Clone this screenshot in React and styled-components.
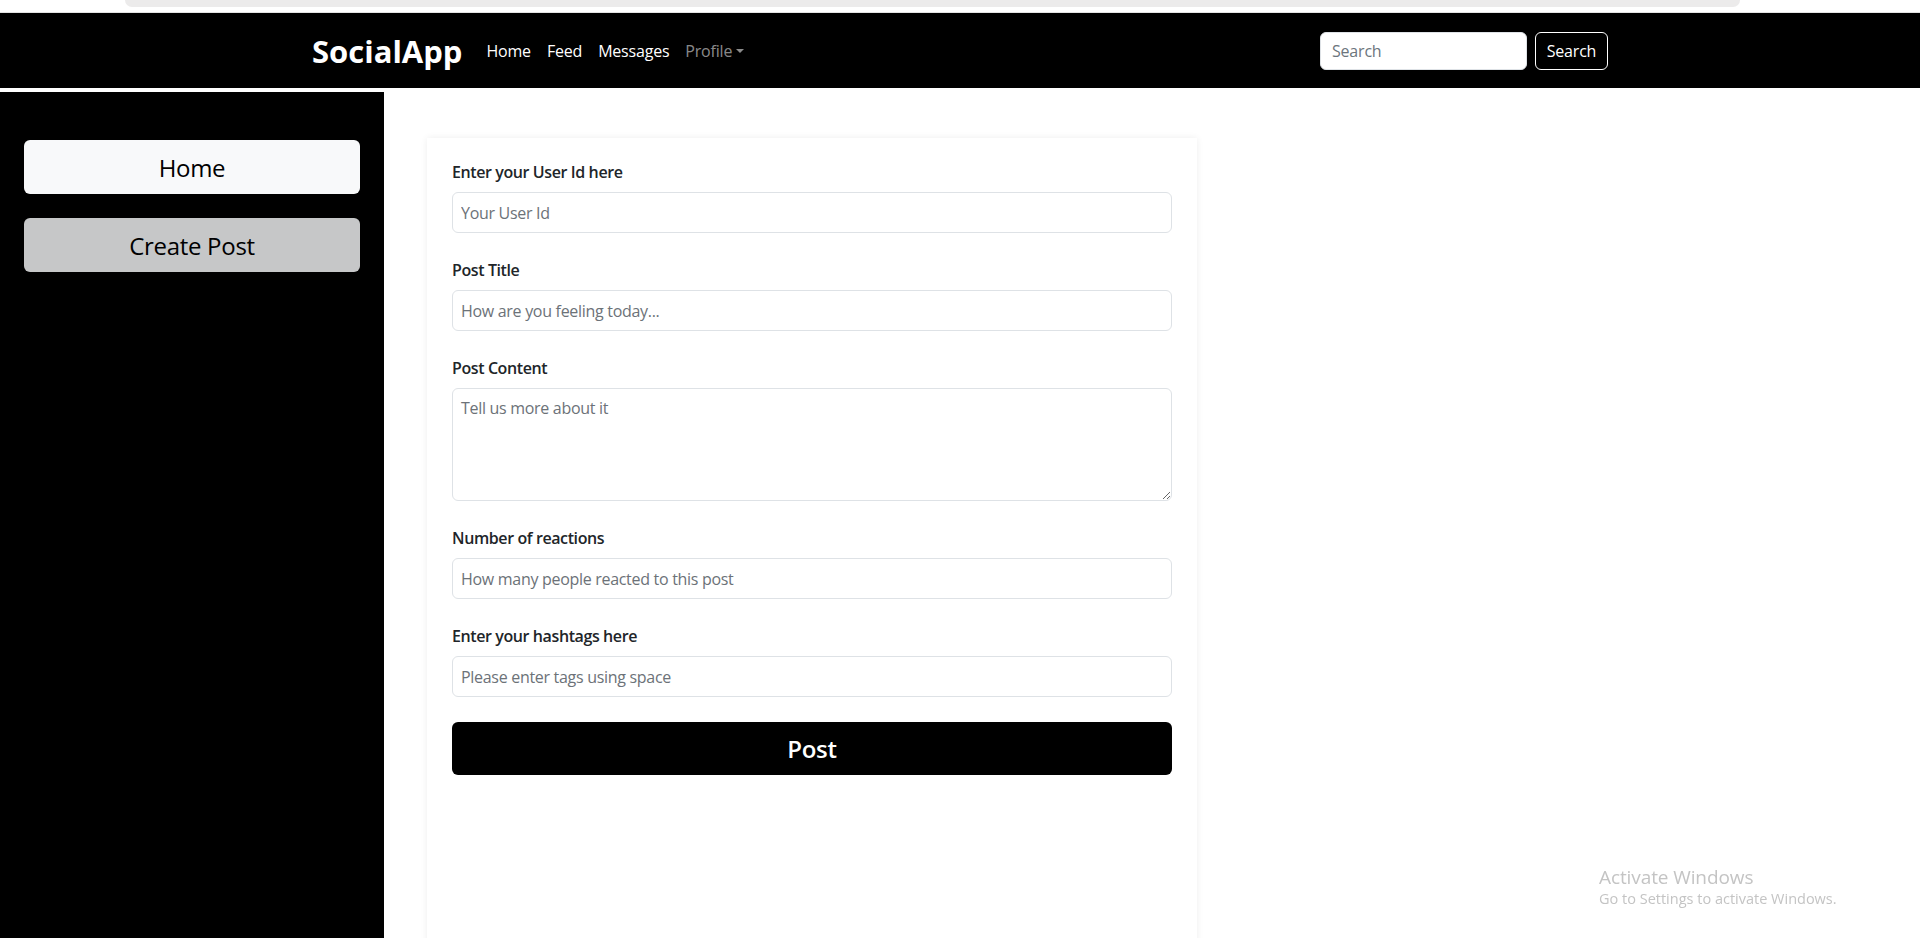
import React from "react";
import styled, { createGlobalStyle } from "styled-components";

const Global = createGlobalStyle`
  html, body {
    margin: 0;
    padding: 0;
    height: 100%;
    overflow: hidden;
    background: #fff;
  }
  body {
    font-family: "Segoe UI", "Open Sans", "Noto Sans", sans-serif;
    color: #212529;
  }
  * { box-sizing: border-box; }
`;

const Page = styled.div`
  display: flex;
  flex-direction: column;
  height: 100vh;
`;

const BrowserStrip = styled.div`
  height: 13px;
  background: #fff;
  border-bottom: 1px solid #e2e2e2;
  padding: 0 180px 0 125px;
  flex-shrink: 0;
`;

const AddressBar = styled.div`
  height: 7px;
  background: #ecebeb;
  border-radius: 0 0 14px 14px;
`;

const Navbar = styled.nav`
  background: #000;
  height: 75px;
  flex-shrink: 0;
  display: flex;
  justify-content: center;
`;

const NavContainer = styled.div`
  width: 100%;
  max-width: 1320px;
  padding: 0 12px;
  display: flex;
  align-items: center;
`;

const Brand = styled.a`
  color: #fff;
  font-size: 31px;
  font-weight: 700;
  letter-spacing: 0;
  margin-right: 16px;
  text-decoration: none;
`;

const NavList = styled.div`
  display: flex;
  align-items: center;
`;

const NavLink = styled.a`
  color: ${(p) => (p.$muted ? "rgba(255,255,255,0.55)" : "#fff")};
  font-size: 16px;
  padding: 8px;
  text-decoration: none;
  display: flex;
  align-items: center;
  letter-spacing: -0.2px;
`;

const Caret = styled.span`
  display: inline-block;
  margin-left: 4px;
  border-top: 4.5px solid currentColor;
  border-left: 4px solid transparent;
  border-right: 4px solid transparent;
`;

const SearchForm = styled.form`
  margin-left: auto;
  display: flex;
  gap: 8px;
`;

const SearchInput = styled.input`
  width: 207px;
  height: 38px;
  border: 1px solid #dee2e6;
  border-radius: 6px;
  padding: 0 11px;
  font-family: inherit;
  font-size: 16px;
  letter-spacing: -0.2px;
  &::placeholder { color: #6c757d; }
`;

const SearchButton = styled.button`
  height: 38px;
  width: 73px;
  background: #000;
  color: #fff;
  border: 1px solid #fff;
  border-radius: 6px;
  font-family: inherit;
  font-size: 16px;
  letter-spacing: -0.2px;
  padding: 0;
`;

const Body = styled.div`
  flex: 1;
  display: flex;
  margin-top: 4px;
  min-height: 0;
`;

const Sidebar = styled.aside`
  width: 384px;
  background: #000;
  padding: 48px 24px;
  display: flex;
  flex-direction: column;
  gap: 24px;
  flex-shrink: 0;
`;

const SideButton = styled.button`
  width: 100%;
  height: 54px;
  border: none;
  border-radius: 6px;
  background: ${(p) => (p.$active ? "#c6c7c8" : "#f8f9fa")};
  color: #000;
  font-family: inherit;
  font-size: 24px;
  font-weight: 500;
  letter-spacing: -0.3px;
`;

const Main = styled.main`
  flex: 1;
  padding: 46px 0 0 43px;
  overflow: hidden;
`;

const Card = styled.form`
  width: 770px;
  height: 900px;
  background: #fff;
  box-shadow: 0 0 7px rgba(0, 0, 0, 0.07);
  padding: 22px 25px;
  display: flex;
  flex-direction: column;
`;

const Field = styled.div`
  display: flex;
  flex-direction: column;
  margin-bottom: 25px;
`;

const Label = styled.label`
  font-size: 16px;
  line-height: 24px;
  font-weight: 600;
  color: #212529;
  margin-bottom: 8px;
  letter-spacing: -0.4px;
`;

const Input = styled.input`
  height: 41px;
  width: 100%;
  border: 1px solid #dee2e6;
  border-radius: 6px;
  padding: 0 8px;
  font-family: inherit;
  font-size: 16px;
  letter-spacing: -0.3px;
  &::placeholder { color: #6c7278; }
`;

const TextArea = styled.textarea`
  height: 113px;
  width: 100%;
  border: 1px solid #dee2e6;
  border-radius: 6px;
  padding: 7px 8px;
  font-family: inherit;
  font-size: 16px;
  line-height: 24px;
  letter-spacing: -0.3px;
  resize: vertical;
  &::placeholder { color: #6c7278; }
`;

const PostButton = styled.button`
  height: 53px;
  width: 100%;
  background: #000;
  color: #fff;
  border: none;
  border-radius: 6px;
  font-family: inherit;
  font-size: 24px;
  font-weight: 600;
  letter-spacing: -0.3px;
`;

const Watermark = styled.div`
  position: fixed;
  left: 1599px;
  top: 864px;
  color: #c4c4c4;
  font-family: "Segoe UI", "Open Sans", sans-serif;
  pointer-events: none;
`;

const WatermarkTitle = styled.div`
  font-size: 19px;
  line-height: 26px;
  letter-spacing: -0.1px;
`;

const WatermarkSub = styled.div`
  font-size: 14.5px;
  line-height: 18px;
  letter-spacing: 0;
`;

const fields = [
  { label: "Enter your User Id here", placeholder: "Your User Id" },
  { label: "Post Title", placeholder: "How are you feeling today..." },
  { label: "Post Content", placeholder: "Tell us more about it", area: true },
  { label: "Number of reactions", placeholder: "How many people reacted to this post" },
  { label: "Enter your hashtags here", placeholder: "Please enter tags using space" },
];

export default function App() {
  return (
    <Page>
      <Global />
      <BrowserStrip>
        <AddressBar />
      </BrowserStrip>
      <Navbar>
        <NavContainer>
          <Brand href="#">SocialApp</Brand>
          <NavList>
            <NavLink href="#">Home</NavLink>
            <NavLink href="#">Feed</NavLink>
            <NavLink href="#">Messages</NavLink>
            <NavLink href="#" $muted>
              Profile<Caret />
            </NavLink>
          </NavList>
          <SearchForm onSubmit={(e) => e.preventDefault()}>
            <SearchInput placeholder="Search" />
            <SearchButton type="button">Search</SearchButton>
          </SearchForm>
        </NavContainer>
      </Navbar>
      <Body>
        <Sidebar>
          <SideButton>Home</SideButton>
          <SideButton $active>Create Post</SideButton>
        </Sidebar>
        <Main>
          <Card onSubmit={(e) => e.preventDefault()}>
            {fields.map((f) => (
              <Field key={f.label}>
                <Label>{f.label}</Label>
                {f.area ? (
                  <TextArea placeholder={f.placeholder} />
                ) : (
                  <Input placeholder={f.placeholder} />
                )}
              </Field>
            ))}
            <PostButton type="button">Post</PostButton>
          </Card>
        </Main>
      </Body>
      <Watermark>
        <WatermarkTitle>Activate Windows</WatermarkTitle>
        <WatermarkSub>Go to Settings to activate Windows.</WatermarkSub>
      </Watermark>
    </Page>
  );
}
